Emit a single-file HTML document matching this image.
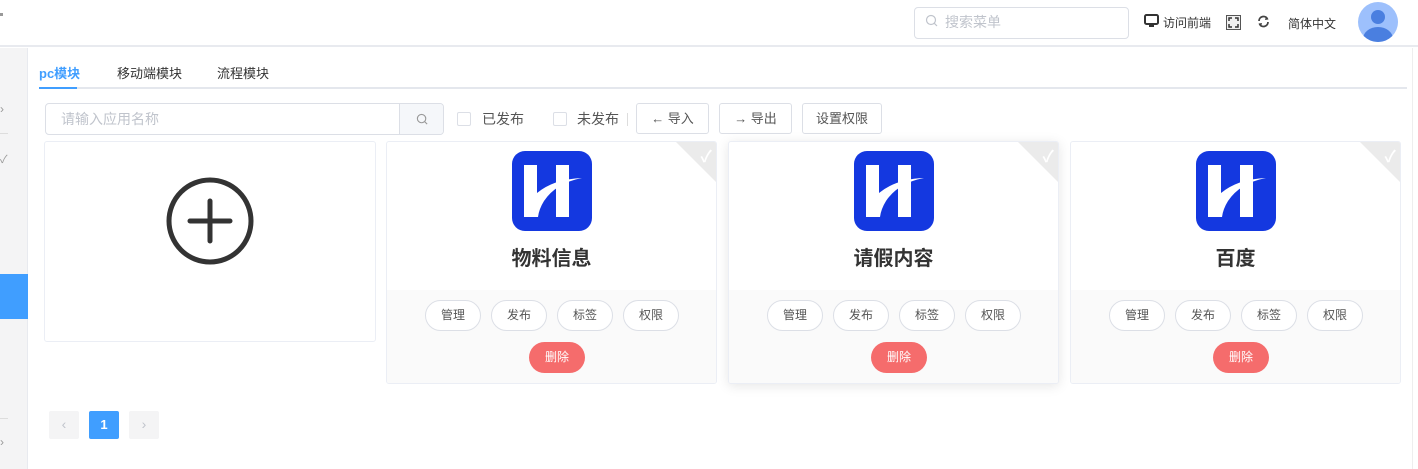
<!DOCTYPE html>
<html><head><meta charset="utf-8"><style>
*{box-sizing:border-box;margin:0;padding:0}
body{width:1418px;height:469px;overflow:hidden;background:#fff;font-family:"Liberation Sans","Noto Sans CJK SC",sans-serif;position:relative;color:#333}
.abs{position:absolute}
.hdr{left:0;top:0;width:1418px;height:47px;background:#fff;border-bottom:2px solid #e8eaef}
.side{left:0;top:48px;width:28px;height:421px;background:#f4f4f5;border-right:1px solid #e8eaef}
.btn{position:absolute;border:1px solid #dcdfe6;border-radius:3px;background:#fff;font-size:13px;color:#555;text-align:center;line-height:29px;height:31px}
.card{position:absolute;top:141px;width:331px;height:243px;border:1px solid #ebeef5;border-radius:3px;background:#fff;overflow:hidden}
.card .foot{position:absolute;left:0;top:148px;width:100%;height:95px;background:#fafafa}
.card .logo{position:absolute;left:125px;top:9px}
.card .t{position:absolute;left:0;width:100%;top:100px;text-align:center;font-size:20px;font-weight:bold;color:#333}
.pill{position:absolute;top:10px;width:56px;height:31px;border:1px solid #dcdfe6;border-radius:16px;background:#fff;font-size:12px;color:#555;text-align:center;line-height:29px}
.del{position:absolute;left:142px;top:52px;width:56px;height:31px;border-radius:16px;background:#f56c6c;color:#fff;font-size:12px;text-align:center;line-height:31px}
.tri{position:absolute;right:0;top:0;width:0;height:0;border-top:40px solid #ebebeb;border-left:40px solid transparent}
.chk{position:absolute;right:4px;top:1px;color:#fff;font-size:16px;font-weight:bold}
.cb{position:absolute;width:14px;height:14px;border:1px solid #dcdfe6;border-radius:2px;top:112px}
</style></head><body>
<div class="abs hdr"></div>
<div class="abs" style="left:0;top:13px;width:3px;height:3px;background:#999"></div>
<div class="abs" style="left:914px;top:7px;width:215px;height:32px;border:1px solid #dcdfe6;border-radius:4px"></div>
<svg class="abs" style="left:925px;top:14px" width="14" height="14" viewBox="0 0 14 14"><circle cx="6" cy="6" r="4.5" fill="none" stroke="#c0c4cc" stroke-width="1.2"/><line x1="9.3" y1="9.3" x2="12" y2="12" stroke="#c0c4cc" stroke-width="1.2"/></svg>
<div class="abs" style="left:945px;top:12px;font-size:14px;color:#c0c4cc">搜索菜单</div>
<svg class="abs" style="left:1144px;top:14px" width="15" height="15" viewBox="0 0 15 15"><rect x="1" y="1" width="13" height="9" rx="1.5" fill="none" stroke="#333" stroke-width="2"/><rect x="5" y="11" width="5" height="2" fill="#333"/></svg>
<div class="abs" style="left:1163px;top:14px;font-size:12px;color:#333">访问前端</div>
<svg class="abs" style="left:1226px;top:15px" width="15" height="15" viewBox="0 0 15 15"><rect x="0.5" y="0.5" width="14" height="14" fill="#f0f0f0" stroke="#555"/><path d="M3 6V3h3M9 3h3v3M12 9v3H9M6 12H3V9" fill="none" stroke="#333" stroke-width="1.5"/></svg>
<svg class="abs" style="left:1257px;top:15px" width="13" height="13" viewBox="0 0 13 13"><path d="M2 6A4.5 4.5 0 0 1 10.5 4M11 7A4.5 4.5 0 0 1 2.5 9" fill="none" stroke="#444" stroke-width="1.8"/><path d="M9 1l2.5 3.5L8 5z" fill="#444"/><path d="M4 12L1.5 8.5 5 8z" fill="#444"/></svg>
<div class="abs" style="left:1288px;top:15px;font-size:12px;color:#333">简体中文</div>
<div class="abs" style="left:1358px;top:2px;width:40px;height:40px;border-radius:50%;background:#9dc0fc;overflow:hidden"><div class="abs" style="left:13px;top:8px;width:14px;height:14px;border-radius:50%;background:#4a7fe0"></div><div class="abs" style="left:5px;top:25px;width:30px;height:24px;border-radius:50%;background:#4a7fe0"></div></div>

<div class="abs side"></div>
<div class="abs" style="left:0;top:133px;width:8px;height:1px;background:#ddd"></div>
<div class="abs" style="left:0;top:418px;width:8px;height:1px;background:#ddd"></div>
<div class="abs" style="left:0;top:102px;font-size:12px;color:#999">›</div>
<div class="abs" style="left:0;top:151px;font-size:11px;color:#999">✓</div>
<div class="abs" style="left:0;top:435px;font-size:12px;color:#999">›</div>
<div class="abs" style="left:0;top:274px;width:28px;height:45px;background:#409eff"></div>
<div class="abs" style="left:1412px;top:48px;width:1px;height:421px;background:#eee"></div>

<div class="abs" style="left:39px;top:63px;font-size:13px;color:#409eff;font-weight:bold">pc模块</div>
<div class="abs" style="left:117px;top:63px;font-size:13px;color:#333">移动端模块</div>
<div class="abs" style="left:217px;top:63px;font-size:13px;color:#333">流程模块</div>
<div class="abs" style="left:39px;top:87px;width:1368px;height:2px;background:#e4e7ed"></div>
<div class="abs" style="left:39px;top:87px;width:38px;height:2px;background:#409eff"></div>

<div class="abs" style="left:45px;top:103px;width:399px;height:32px;border:1px solid #dcdfe6;border-radius:4px;overflow:hidden"><div class="abs" style="left:353px;top:0;width:44px;height:30px;background:#f5f7fa;border-left:1px solid #dcdfe6"></div></div>
<div class="abs" style="left:61px;top:109px;font-size:14px;color:#c0c4cc">请输入应用名称</div>
<svg class="abs" style="left:416px;top:113px" width="13" height="13" viewBox="0 0 14 14"><circle cx="6" cy="6" r="4.5" fill="none" stroke="#999" stroke-width="1.2"/><line x1="9.3" y1="9.3" x2="12" y2="12" stroke="#999" stroke-width="1.2"/></svg>
<div class="cb" style="left:457px"></div>
<div class="abs" style="left:482px;top:109px;font-size:14px;color:#555">已发布</div>
<div class="cb" style="left:553px"></div>
<div class="abs" style="left:577px;top:109px;font-size:14px;color:#555">未发布</div>
<div class="abs" style="left:627px;top:113px;width:1px;height:13px;background:#ddd"></div>
<div class="btn" style="left:636px;top:103px;width:73px">← 导入</div>
<div class="btn" style="left:719px;top:103px;width:73px">→ 导出</div>
<div class="btn" style="left:802px;top:103px;width:80px">设置权限</div>

<div class="abs" style="left:44px;top:141px;width:332px;height:201px;border:1px solid #ebeef5;border-radius:3px"></div>
<svg class="abs" style="left:165px;top:176px" width="90" height="90" viewBox="0 0 90 90"><circle cx="45" cy="45" r="41" fill="none" stroke="#333" stroke-width="5"/><path d="M25 45h40M45 25v40" stroke="#333" stroke-width="5" stroke-linecap="round"/></svg>

<div class="card" style="left:386px"><div class="foot"></div><div class="tri"></div><div class="chk">✓</div>
<svg class="logo" width="80" height="80" viewBox="0 0 80 80"><rect width="80" height="80" rx="13" fill="#1438e0"/><rect x="12" y="14" width="13" height="52" fill="#fff"/><rect x="44" y="14" width="13" height="52" fill="#fff"/><path d="M25 42Q42 28 70 27Q44 32 32 50Q27 58 26 66H25Z" fill="#fff"/></svg>
<div class="t">物料信息</div>
<div class="foot" style="background:none"><div class="pill" style="left:38px">管理</div><div class="pill" style="left:104px">发布</div><div class="pill" style="left:170px">标签</div><div class="pill" style="left:236px">权限</div><div class="del">删除</div></div></div>

<div class="card" style="left:728px;box-shadow:0 2px 12px rgba(0,0,0,.1)"><div class="foot"></div><div class="tri"></div><div class="chk">✓</div>
<svg class="logo" width="80" height="80" viewBox="0 0 80 80"><rect width="80" height="80" rx="13" fill="#1438e0"/><rect x="12" y="14" width="13" height="52" fill="#fff"/><rect x="44" y="14" width="13" height="52" fill="#fff"/><path d="M25 42Q42 28 70 27Q44 32 32 50Q27 58 26 66H25Z" fill="#fff"/></svg>
<div class="t">请假内容</div>
<div class="foot" style="background:none"><div class="pill" style="left:38px">管理</div><div class="pill" style="left:104px">发布</div><div class="pill" style="left:170px">标签</div><div class="pill" style="left:236px">权限</div><div class="del">删除</div></div></div>

<div class="card" style="left:1070px"><div class="foot"></div><div class="tri"></div><div class="chk">✓</div>
<svg class="logo" width="80" height="80" viewBox="0 0 80 80"><rect width="80" height="80" rx="13" fill="#1438e0"/><rect x="12" y="14" width="13" height="52" fill="#fff"/><rect x="44" y="14" width="13" height="52" fill="#fff"/><path d="M25 42Q42 28 70 27Q44 32 32 50Q27 58 26 66H25Z" fill="#fff"/></svg>
<div class="t">百度</div>
<div class="foot" style="background:none"><div class="pill" style="left:38px">管理</div><div class="pill" style="left:104px">发布</div><div class="pill" style="left:170px">标签</div><div class="pill" style="left:236px">权限</div><div class="del">删除</div></div></div>

<div class="abs" style="left:49px;top:411px;width:30px;height:28px;background:#f4f4f5;border-radius:2px;color:#c0c4cc;text-align:center;line-height:27px;font-size:14px">‹</div>
<div class="abs" style="left:89px;top:411px;width:30px;height:28px;background:#409eff;border-radius:2px;color:#fff;text-align:center;line-height:28px;font-size:13px;font-weight:bold">1</div>
<div class="abs" style="left:129px;top:411px;width:30px;height:28px;background:#f4f4f5;border-radius:2px;color:#c0c4cc;text-align:center;line-height:27px;font-size:14px">›</div>
</body></html>
